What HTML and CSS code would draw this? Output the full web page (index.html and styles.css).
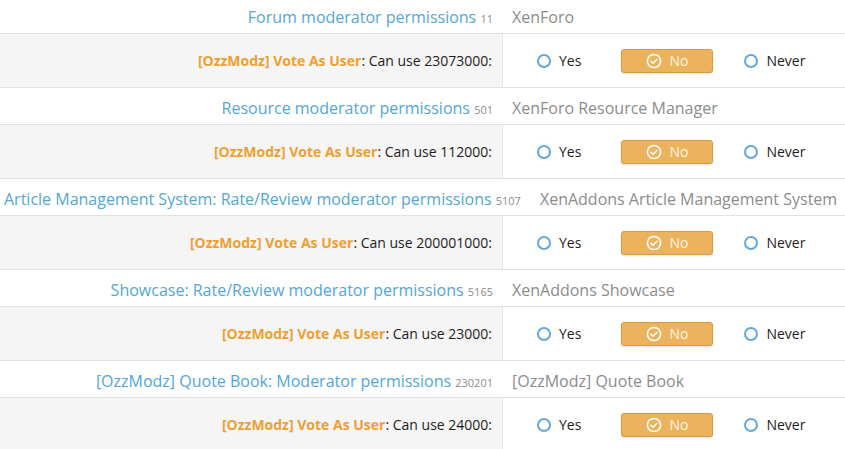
FILE: index.html
```html
<!DOCTYPE html>
<html>
<head>
<meta charset="utf-8">
<link rel="stylesheet" href="styles.css">
</head>
<body>
<div class="list">
  <div class="hdr">
    <div class="hdr-title"><span class="t">Forum moderator permissions</span> <span class="num">11</span></div>
    <div class="hdr-addon">XenForo</div>
  </div>
  <div class="row">
    <div class="lbl"><span class="addon">[OzzModz] Vote As User</span>: Can use 23073000:</div>
    <div class="opts">
      <span class="opt"><span class="radio"></span>Yes</span>
      <span class="btn"><svg width="16" height="16" viewBox="0 0 16 16"><circle cx="8" cy="8" r="6.6" fill="none" stroke="#fff" stroke-width="1.5"/><path d="M5 8.2l2 2 4-4" fill="none" stroke="#fff" stroke-width="1.5" stroke-linecap="round" stroke-linejoin="round"/></svg>No</span>
      <span class="opt"><span class="radio"></span>Never</span>
    </div>
  </div>

  <div class="hdr">
    <div class="hdr-title"><span class="t">Resource moderator permissions</span> <span class="num">501</span></div>
    <div class="hdr-addon">XenForo Resource Manager</div>
  </div>
  <div class="row">
    <div class="lbl"><span class="addon">[OzzModz] Vote As User</span>: Can use 112000:</div>
    <div class="opts">
      <span class="opt"><span class="radio"></span>Yes</span>
      <span class="btn"><svg width="16" height="16" viewBox="0 0 16 16"><circle cx="8" cy="8" r="6.6" fill="none" stroke="#fff" stroke-width="1.5"/><path d="M5 8.2l2 2 4-4" fill="none" stroke="#fff" stroke-width="1.5" stroke-linecap="round" stroke-linejoin="round"/></svg>No</span>
      <span class="opt"><span class="radio"></span>Never</span>
    </div>
  </div>

  <div class="hdr">
    <div class="hdr-title"><span class="t">Article Management System: Rate/Review moderator permissions</span> <span class="num">5107</span></div>
    <div class="hdr-addon">XenAddons Article Management System</div>
  </div>
  <div class="row">
    <div class="lbl"><span class="addon">[OzzModz] Vote As User</span>: Can use 200001000:</div>
    <div class="opts">
      <span class="opt"><span class="radio"></span>Yes</span>
      <span class="btn"><svg width="16" height="16" viewBox="0 0 16 16"><circle cx="8" cy="8" r="6.6" fill="none" stroke="#fff" stroke-width="1.5"/><path d="M5 8.2l2 2 4-4" fill="none" stroke="#fff" stroke-width="1.5" stroke-linecap="round" stroke-linejoin="round"/></svg>No</span>
      <span class="opt"><span class="radio"></span>Never</span>
    </div>
  </div>

  <div class="hdr">
    <div class="hdr-title"><span class="t">Showcase: Rate/Review moderator permissions</span> <span class="num">5165</span></div>
    <div class="hdr-addon">XenAddons Showcase</div>
  </div>
  <div class="row">
    <div class="lbl"><span class="addon">[OzzModz] Vote As User</span>: Can use 23000:</div>
    <div class="opts">
      <span class="opt"><span class="radio"></span>Yes</span>
      <span class="btn"><svg width="16" height="16" viewBox="0 0 16 16"><circle cx="8" cy="8" r="6.6" fill="none" stroke="#fff" stroke-width="1.5"/><path d="M5 8.2l2 2 4-4" fill="none" stroke="#fff" stroke-width="1.5" stroke-linecap="round" stroke-linejoin="round"/></svg>No</span>
      <span class="opt"><span class="radio"></span>Never</span>
    </div>
  </div>

  <div class="hdr">
    <div class="hdr-title"><span class="t">[OzzModz] Quote Book: Moderator permissions</span> <span class="num">230201</span></div>
    <div class="hdr-addon">[OzzModz] Quote Book</div>
  </div>
  <div class="row">
    <div class="lbl"><span class="addon">[OzzModz] Vote As User</span>: Can use 24000:</div>
    <div class="opts">
      <span class="opt"><span class="radio"></span>Yes</span>
      <span class="btn"><svg width="16" height="16" viewBox="0 0 16 16"><circle cx="8" cy="8" r="6.6" fill="none" stroke="#fff" stroke-width="1.5"/><path d="M5 8.2l2 2 4-4" fill="none" stroke="#fff" stroke-width="1.5" stroke-linecap="round" stroke-linejoin="round"/></svg>No</span>
      <span class="opt"><span class="radio"></span>Never</span>
    </div>
  </div>
</div>
</body>
</html>
```

FILE: styles.css
```css
html, body {
  margin: 0;
  padding: 0;
  background: #fff;
}
body {
  font-family: "Open Sans", "Noto Sans", sans-serif;
  color: #1d1d1d;
  overflow: hidden;
}
.list {
  margin-top: -3px;
}
.hdr {
  display: flex;
  align-items: center;
  height: 33px;
  padding-top: 3px;
  border-bottom: 1px solid #e2e2e2;
  white-space: nowrap;
}
.hdr-title {
  flex: 0 0 auto;
  min-width: 489px;
  padding: 0 10px 0 4px;
  text-align: right;
  color: #53a6d8;
  font-size: 16px;
}
.num {
  font-size: 11px;
  color: #8c8c8c;
}
.hdr-addon {
  padding-left: 9px;
  font-size: 16px;
  color: #8c8c8c;
}
.row {
  display: flex;
  height: 53px;
  border-bottom: 1px solid #e2e2e2;
}
.lbl {
  flex: 0 0 503px;
  box-sizing: border-box;
  background: #f5f5f5;
  border-right: 1px solid #e6e6e6;
  display: flex;
  align-items: center;
  justify-content: flex-end;
  padding: 0 10px 0 0;
  font-size: 14px;
  white-space: nowrap;
}
.addon {
  color: #ef9f30;
  font-weight: 700;
}
.opts {
  display: flex;
  align-items: center;
  padding: 0 0 0 34px;
  font-size: 14px;
}
.opt {
  display: inline-flex;
  align-items: center;
}
.radio {
  width: 10px;
  height: 10px;
  border: 2px solid #62a8dc;
  border-radius: 50%;
  margin-right: 8px;
}
.btn {
  display: inline-flex;
  align-items: center;
  justify-content: center;
  gap: 7px;
  width: 90px;
  height: 22px;
  margin: 0 31px 0 40px;
  background: #ecb35e;
  border: 1px solid #d89b42;
  border-radius: 3px;
  color: #fff4e3;
  box-shadow: 0 1px 2px rgba(0,0,0,0.12);
}
```
